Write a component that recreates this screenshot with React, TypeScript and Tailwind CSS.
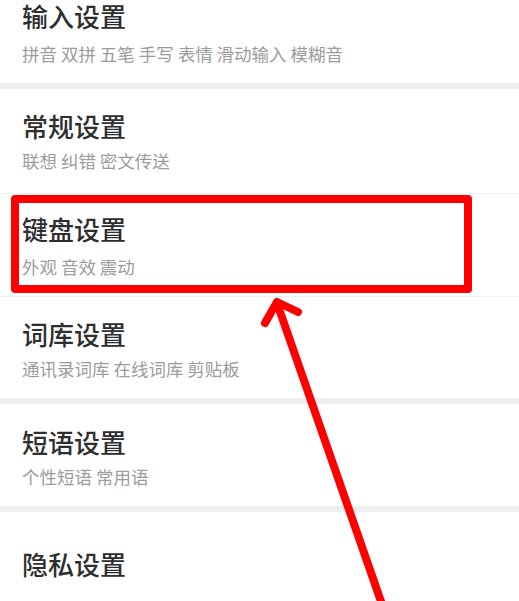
import React from "react";

type Item = {
  title: string;
  sub?: string;
  pt: string;
  gap: string;
  pb: string;
};

const items: Item[] = [
  { title: "输入设置", sub: "拼音 双拼 五笔 手写 表情 滑动输入 模糊音", pt: "pt-[3px]", gap: "mt-[16px]", pb: "pb-[21px]" },
  { title: "常规设置", sub: "联想 纠错 密文传送", pt: "pt-[24px]", gap: "mt-[13px]", pb: "pb-[24px]" },
  { title: "键盘设置", sub: "外观 音效 震动", pt: "pt-[22px]", gap: "mt-[16px]", pb: "pb-[21px]" },
  { title: "词库设置", sub: "通讯录词库 在线词库 剪贴板", pt: "pt-[24px]", gap: "mt-[13px]", pb: "pb-[21px]" },
  { title: "短语设置", sub: "个性短语 常用语", pt: "pt-[25px]", gap: "mt-[13px]", pb: "pb-[21px]" },
  { title: "隐私设置", pt: "pt-[39px]", gap: "", pb: "pb-[40px]" },
];

// what sits under each row: band = thick grey gap, line = hairline
const dividers = ["band", "line", "line", "band", "band", ""];

function Row({ item }: { item: Item }) {
  return (
    <div className={`px-[22px] ${item.pt} ${item.pb}`}>
      <div className="text-[26px] leading-[26px] font-medium text-[#2e2e2e]">{item.title}</div>
      {item.sub && (
        <div className={`${item.gap} text-[17.5px] leading-[17px] text-[#9c9c9c] whitespace-nowrap`}>
          {item.sub}
        </div>
      )}
    </div>
  );
}

export default function App() {
  return (
    <div
      className="relative w-[519px] h-[601px] overflow-hidden bg-white"
      style={{ fontFamily: '"Noto Sans CJK SC", "Noto Sans", sans-serif' }}
    >
      <div className="flex flex-col">
        {items.map((item, i) => (
          <div key={item.title}>
            <Row item={item} />
            {dividers[i] === "band" && <div className="h-[6px] bg-[#efefef]" />}
            {dividers[i] === "line" && <div className="h-px bg-[#f1f1f1]" />}
          </div>
        ))}
      </div>

      {/* annotation: highlight box */}
      <div className="absolute left-[11px] top-[195px] w-[461px] h-[98px] border-[8px] border-[#fe0000] rounded-[4px]" />

      {/* annotation: arrow */}
      <svg className="absolute inset-0" width="519" height="601" viewBox="0 0 519 601">
        <g stroke="#fe0000" strokeWidth="8" strokeLinecap="round" strokeLinejoin="round" fill="none">
          <path d="M277 303 L384 610" />
          <path d="M265 323 L277 302 L298 312" />
        </g>
      </svg>
    </div>
  );
}
